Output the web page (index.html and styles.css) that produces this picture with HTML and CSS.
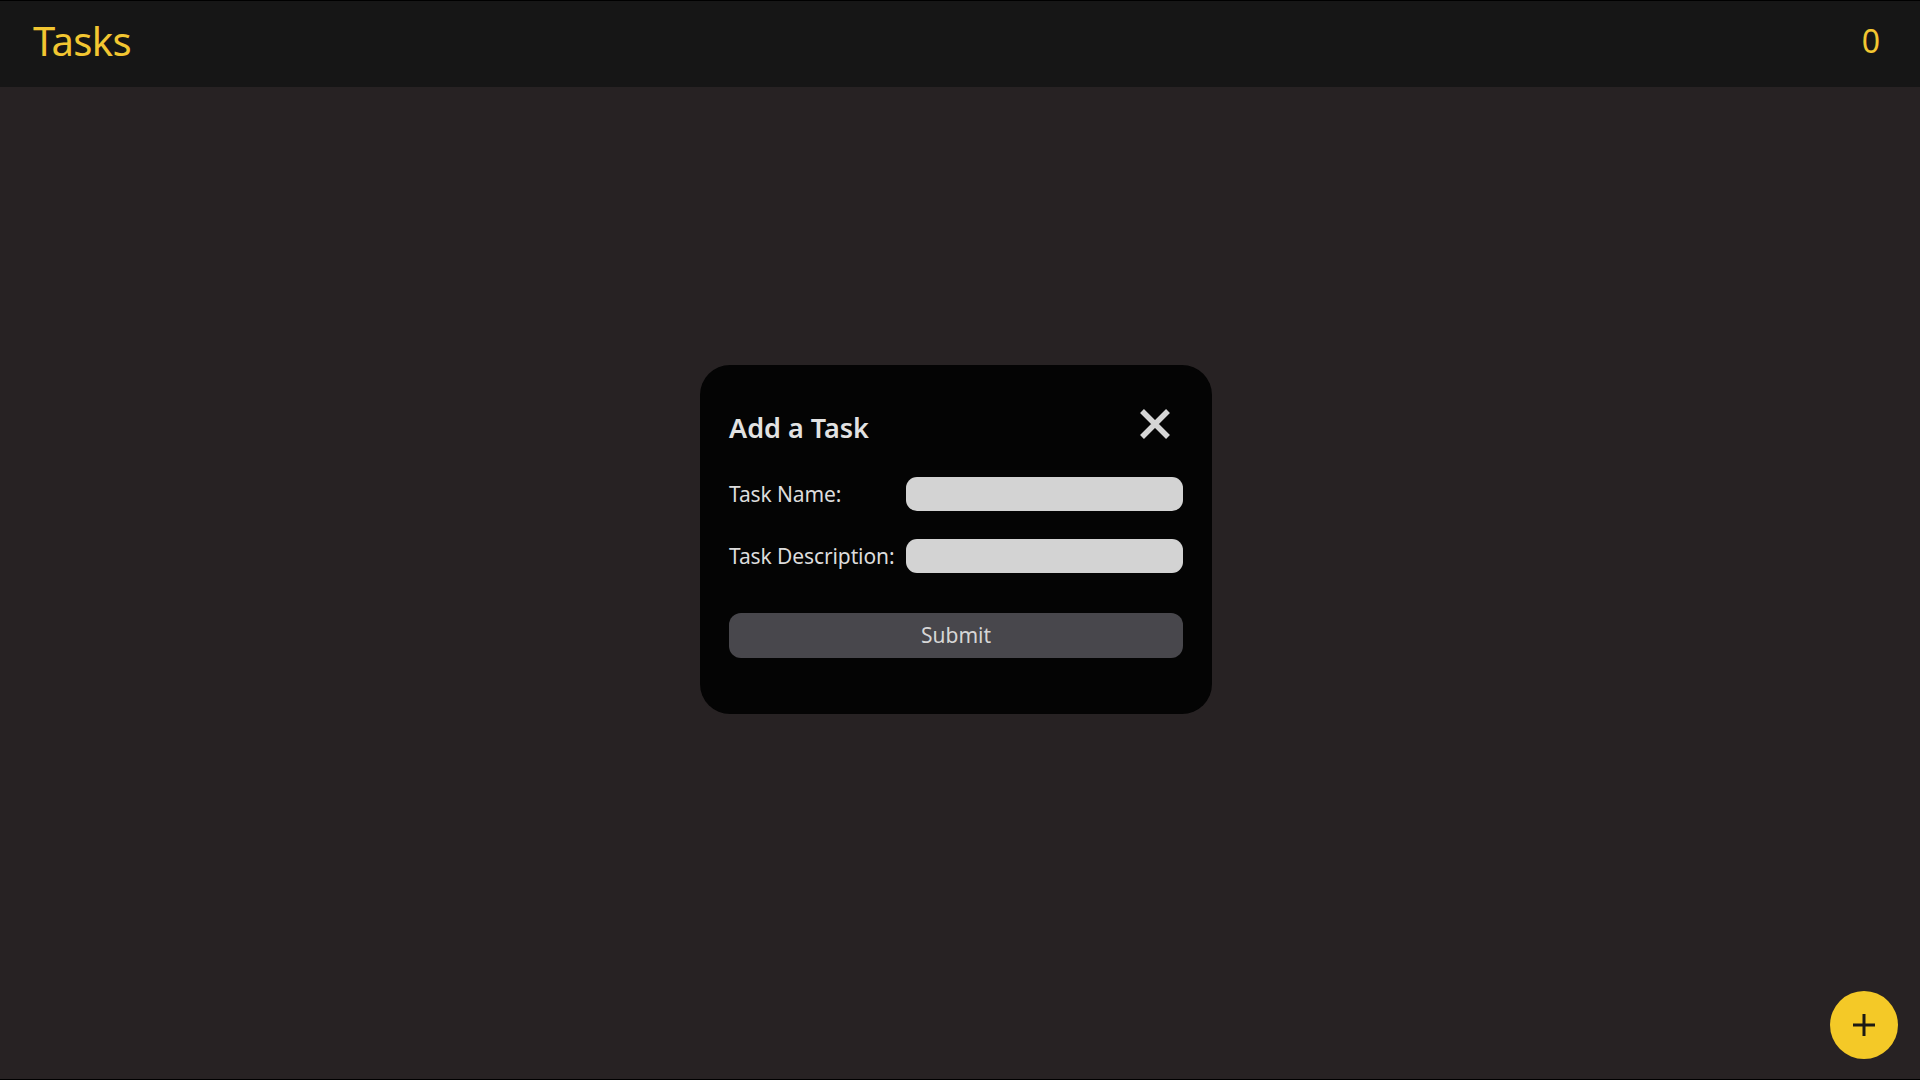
FILE: index.html
```html
<!DOCTYPE html>
<html lang="en">
<head>
<meta charset="utf-8">
<title>Tasks</title>
<link rel="stylesheet" href="styles.css">
</head>
<body>
<div class="app">
  <header class="topbar">
    <h1 class="brand">Tasks</h1>
    <span class="count">0</span>
  </header>
  <main class="stage">
    <div class="modal">
      <div class="modal-head">
        <h2 class="modal-title">Add a Task</h2>
        <button class="close" aria-label="Close">
          <svg width="34" height="30" viewBox="0 0 34 30"><path d="M4 2 L30 28 M30 2 L4 28" stroke="#d6d6d6" stroke-width="5.5" stroke-linecap="butt" fill="none"/></svg>
        </button>
      </div>
      <form class="form">
        <label class="label" for="tn">Task Name:</label>
        <input class="field" id="tn" type="text">
        <label class="label" for="td">Task Description:</label>
        <input class="field" id="td" type="text">
      </form>
      <button class="submit">Submit</button>
    </div>
  </main>
  <button class="fab" aria-label="Add">
    <svg width="22" height="22" viewBox="0 0 22 22"><path d="M11 0 V22 M0 11 H22" stroke="#1c1a14" stroke-width="3" fill="none"/></svg>
  </button>
</div>
</body>
</html>
```
FILE: styles.css
```css
* { box-sizing: border-box; }
html, body { margin: 0; padding: 0; height: 100%; }
body {
  background: #272223;
  font-family: "Noto Sans", "Open Sans", sans-serif;
  overflow: hidden;
}
.app {
  height: 100vh;
  display: flex;
  flex-direction: column;
  border-top: 1px solid #000;
  border-bottom: 1px solid #000;
  position: relative;
}
.topbar {
  height: 86px;
  flex: 0 0 86px;
  background: #161616;
  display: flex;
  align-items: center;
  justify-content: space-between;
  padding: 0 40px 7px 33px;
}
.brand {
  margin: 0;
  font-weight: 400;
  font-size: 40px;
  color: #f2c631;
  letter-spacing: -0.6px;
  line-height: 1;
}
.count {
  font-size: 32px;
  color: #f2c631;
  line-height: 1;
}
.stage {
  flex: 1;
  display: flex;
  align-items: center;
  justify-content: center;
  padding: 0 8px 0 0;
  margin-top: -88px;
}
.modal {
  width: 512px;
  height: 349px;
  background: #040404;
  border-radius: 30px;
  padding: 40px 29px 56px 29px;
  display: flex;
  flex-direction: column;
}
.modal-head {
  height: 40px;
  display: flex;
  align-items: center;
  justify-content: space-between;
}
.modal-title {
  margin: 0;
  font-size: 27px;
  font-weight: 600;
  color: #e2e2e2;
  letter-spacing: 0;
  line-height: 1;
  padding-top: 6px;
}
.close {
  background: none;
  border: 0;
  padding: 0;
  margin-right: 11px;
  width: 34px;
  height: 30px;
  cursor: pointer;
  display: flex;
}
.form {
  margin-top: 33px;
  display: grid;
  grid-template-columns: auto 1fr;
  column-gap: 12px;
  row-gap: 28px;
  align-items: center;
}
.label {
  font-size: 21px;
  color: #dcdcdc;
  letter-spacing: -0.1px;
  white-space: nowrap;
}
.field {
  height: 34px;
  border: 0;
  border-radius: 11px;
  background: #d3d3d3;
  width: 100%;
}
.submit {
  margin-top: 40px;
  height: 45px;
  border: 0;
  border-radius: 12px;
  background: #48474c;
  color: #d6d6d6;
  font-family: inherit;
  font-size: 21px;
  cursor: pointer;
}
.fab {
  position: absolute;
  right: 22px;
  bottom: 20px;
  width: 68px;
  height: 68px;
  border-radius: 50%;
  border: 0;
  background: #f4c927;
  display: flex;
  align-items: center;
  justify-content: center;
  cursor: pointer;
  padding: 0;
}
```
